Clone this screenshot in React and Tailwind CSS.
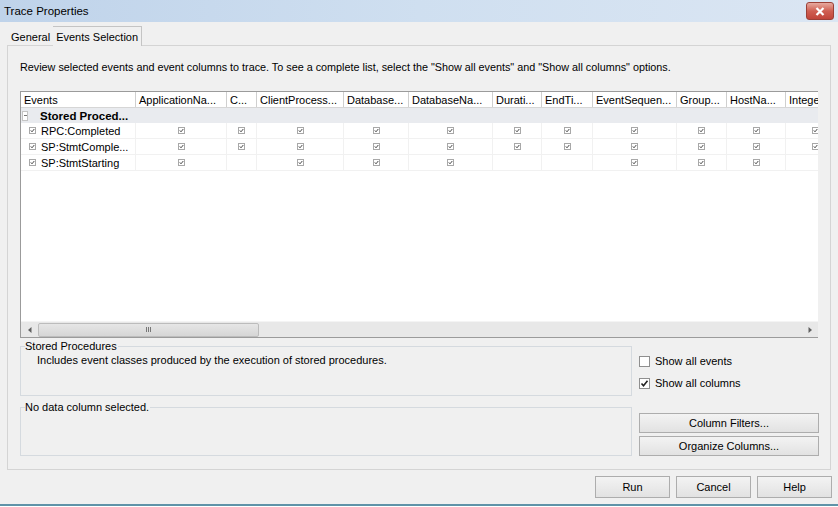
import React from 'react';

const columns = [
  { name: 'Events', cls: 'w-[115px]' },
  { name: 'ApplicationNa...', cls: 'w-[91px]' },
  { name: 'C...', cls: 'w-[30px]' },
  { name: 'ClientProcess...', cls: 'w-[87px]' },
  { name: 'Database...', cls: 'w-[65px]' },
  { name: 'DatabaseNa...', cls: 'w-[84px]' },
  { name: 'Durati...', cls: 'w-[49px]' },
  { name: 'EndTi...', cls: 'w-[51px]' },
  { name: 'EventSequen...', cls: 'w-[84px]' },
  { name: 'Group...', cls: 'w-[50px]' },
  { name: 'HostNa...', cls: 'w-[59px]' },
  { name: 'IntegerData...', cls: 'w-[60px]' },
];

// 1 = checked, 0 = empty; one flag per data column (after Events)
const rows = [
  { name: 'RPC:Completed', cells: [1, 1, 1, 1, 1, 1, 1, 1, 1, 1, 1] },
  { name: 'SP:StmtComple...', cells: [1, 1, 1, 1, 1, 1, 1, 1, 1, 1, 1] },
  { name: 'SP:StmtStarting', cells: [1, 0, 1, 1, 1, 0, 0, 1, 1, 1, 0] },
];

function TinyCheck() {
  return (
    <svg width="7" height="7" viewBox="0 0 7 7" className="block">
      <rect x="0.5" y="0.5" width="6" height="6" fill="#fff" stroke="#a8a8a8" />
      <path d="M1.8 3.4 L3 4.8 L5.3 2" fill="none" stroke="#4a4a4a" strokeWidth="1" />
    </svg>
  );
}

function WinButton({ children, className = '' }) {
  return (
    <button
      className={`h-[20px] flex items-center justify-center border border-[#adadad] bg-gradient-to-b from-[#f3f3f3] to-[#e2e2e2] text-[11px] text-black ${className}`}
    >
      {children}
    </button>
  );
}

function CheckRow({ label, checked }) {
  return (
    <div className="flex items-center gap-[5px] h-[12px]">
      <div className="w-[11px] h-[11px] border border-[#8f8f8f] bg-white flex items-center justify-center">
        {checked && (
          <svg width="9" height="9" viewBox="0 0 9 9">
            <path d="M1.5 4.5 L3.5 6.8 L7.5 1.8" fill="none" stroke="#222" strokeWidth="1.6" />
          </svg>
        )}
      </div>
      <span>{label}</span>
    </div>
  );
}

export default function App() {
  return (
    <div className="w-[838px] h-[507px] overflow-hidden flex flex-col bg-[#f0f0f0] text-[11px] text-black font-['Liberation_Sans',Arial,sans-serif] leading-[14px]">
      {/* title bar */}
      <div className="h-[22px] shrink-0 flex items-start justify-between bg-gradient-to-r from-[#bfd3ea] via-[#cfdff0] to-[#dbe6f3]">
        <span className="pl-[4px] pt-[4px] text-[11.5px]">Trace Properties</span>
        <div className="mr-[4px] mt-[2px] w-[28px] h-[18px] rounded-[3px] border border-[#9b4037] bg-gradient-to-b from-[#e6a99f] via-[#cf5f52] to-[#c1453a] flex items-center justify-center">
          <svg width="10" height="9" viewBox="0 0 10 9">
            <path d="M1.5 1 L8.5 8 M8.5 1 L1.5 8" stroke="#fff" strokeWidth="2.2" />
          </svg>
        </div>
      </div>

      {/* tabs */}
      <div className="h-[23px] shrink-0 flex items-end pl-[8px]">
        <div className="h-[17px] px-[3px] flex items-center">General</div>
        <div className="h-[20px] px-[3px] flex items-center border border-b-0 border-l-0 border-[#c4c4c4] bg-[#f0f0f0] relative top-px">
          Events Selection
        </div>
      </div>

      {/* tab panel */}
      <div className="ml-[7px] w-[824px] h-[425px] shrink-0 border border-[#d4d4d4] flex flex-col pl-[12px]">
        <p className="pt-[14px] h-[45px] text-[10.8px]">
          Review selected events and event columns to trace. To see a complete list, select the "Show all events" and "Show all columns" options.
        </p>

        {/* grid */}
        <div className="w-[798px] h-[247px] border border-r-0 border-[#9b9b9b] flex flex-col bg-white overflow-hidden">
          <div className="flex-1 overflow-hidden">
            <div className="w-[830px]">
              <div className="flex h-[16px] border-b border-[#d6d6d6]">
                {columns.map((c) => (
                  <div key={c.name} className={`${c.cls} shrink-0 border-r border-[#cfcfcf] pl-[3px] flex items-center whitespace-nowrap overflow-hidden`}>
                    {c.name}
                  </div>
                ))}
              </div>
              <div className="flex items-center h-[15px] bg-[#e9ebef]">
                <div className="ml-[1px] w-[6px] h-[10px] border border-[#c4c4c4] bg-white flex items-center justify-center">
                  <div className="w-[3px] h-px bg-[#777]" />
                </div>
                <span className="ml-[12px] font-bold text-[11.5px]">Stored Proced...</span>
              </div>
              {rows.map((r) => (
                <div key={r.name} className="flex h-[16px] border-b border-[#f1f1f1]">
                  <div className="w-[115px] shrink-0 flex items-center border-r border-[#f1f1f1]">
                    <div className="ml-[8px] mr-[5px]">
                      <TinyCheck />
                    </div>
                    <span className="whitespace-nowrap">{r.name}</span>
                  </div>
                  {r.cells.map((on, i) => (
                    <div key={i} className={`${columns[i + 1].cls} shrink-0 flex items-center justify-center border-r border-[#f1f1f1]`}>
                      {on ? <TinyCheck /> : null}
                    </div>
                  ))}
                </div>
              ))}
            </div>
          </div>

          {/* horizontal scrollbar */}
          <div className="h-[16px] shrink-0 flex items-center bg-[#e8e8e8] border-t border-[#f4f4f4]">
            <div className="w-[17px] flex justify-center">
              <svg width="4" height="6" viewBox="0 0 4 6"><path d="M3.5 0 L0 3 L3.5 6 Z" fill="#606060" /></svg>
            </div>
            <div className="w-[221px] h-[14px] rounded-[2px] border border-[#bcbcbc] bg-gradient-to-b from-[#e6e6e6] to-[#d6d6d6] flex items-center justify-center gap-[1px]">
              <div className="w-px h-[5px] bg-[#777]" />
              <div className="w-px h-[5px] bg-[#777]" />
              <div className="w-px h-[5px] bg-[#777]" />
            </div>
            <div className="flex-1" />
            <div className="w-[17px] flex justify-center">
              <svg width="4" height="6" viewBox="0 0 4 6"><path d="M0.5 0 L4 3 L0.5 6 Z" fill="#606060" /></svg>
            </div>
          </div>
        </div>

        {/* lower area */}
        <div className="flex mt-px">
          <div className="w-[612px] flex flex-col gap-[4px]">
            <fieldset className="h-[57px] border border-[#d5dadf] px-[16px]">
              <legend className="ml-[-12px] px-0 pr-[1px]">Stored Procedures</legend>
              <p>Includes event classes produced by the execution of stored procedures.</p>
            </fieldset>
            <fieldset className="h-[56px] border border-[#d5dadf]">
              <legend className="ml-[4px] px-0 pr-[1px]">No data column selected.</legend>
            </fieldset>
          </div>
          <div className="ml-[7px] w-[180px] flex flex-col">
            <div className="mt-[16px] flex flex-col gap-[10px]">
              <CheckRow label="Show all events" />
              <CheckRow label="Show all columns" checked />
            </div>
            <WinButton className="mt-[24px] w-[180px]">Column Filters...</WinButton>
            <WinButton className="mt-[3px] w-[180px]">Organize Columns...</WinButton>
          </div>
        </div>
      </div>

      {/* dialog buttons */}
      <div className="mt-[6px] flex justify-end gap-[6px] pr-[6px]">
        <WinButton className="!h-[22px] w-[75px] border-[#707070]">Run</WinButton>
        <WinButton className="!h-[22px] w-[75px]">Cancel</WinButton>
        <WinButton className="!h-[22px] w-[75px]">Help</WinButton>
      </div>
      <div className="mt-[6px] h-[2px] bg-[#5f93a8]" />
      <div className="flex-1 bg-white" />
    </div>
  );
}
